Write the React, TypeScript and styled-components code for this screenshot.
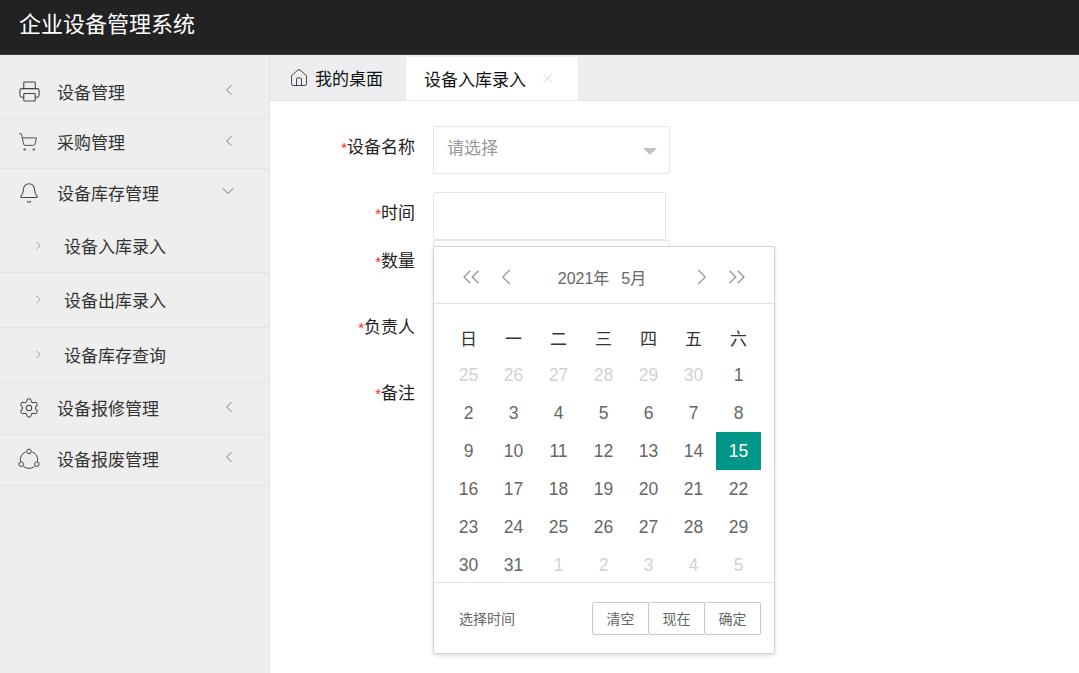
import React from 'react'
import styled, { createGlobalStyle } from 'styled-components'
import { Bell, ChevronDown, ChevronLeft, ChevronRight, ChevronsLeft, ChevronsRight, Home, Printer, Settings, ShoppingCart, X } from 'lucide-react'

const GlobalStyle = createGlobalStyle`
  html, body { margin: 0; padding: 0; height: 100%; background: #fff; }
  body { font-family: "Liberation Sans", "Noto Sans CJK SC", sans-serif; overflow: hidden; }
`

const ShareIcon = () => (
  <svg width="22" height="22" viewBox="0 0 22 22" fill="none" stroke="#444" strokeWidth="1">
    <path d="M7.6 3.9A8.2 8.2 0 0 0 2.6 13.6M5.4 18.2a8.2 8.2 0 0 0 11.2 0M19.4 13.6a8.2 8.2 0 0 0-5-9.7" />
    <circle cx="11" cy="3.4" r="2.3" />
    <circle cx="3.2" cy="16.2" r="2.3" />
    <circle cx="18.8" cy="16.2" r="2.3" />
  </svg>
)

const menuTop = [
  { text: '设备管理', icon: <Printer size={23} strokeWidth={1.1} color="#444" /> },
  { text: '采购管理', icon: <ShoppingCart size={20} strokeWidth={1.1} color="#444" /> },
]
const menuBottom = [
  { text: '设备报修管理', icon: <Settings size={22} strokeWidth={1.1} color="#444" /> },
  { text: '设备报废管理', icon: <ShareIcon /> },
]
const subMenu = ['设备入库录入', '设备出库录入', '设备库存查询']
const weekDays = ['日', '一', '二', '三', '四', '五', '六']

type Day = { n: number; muted?: boolean; active?: boolean }
const days: Day[] = [
  ...[25, 26, 27, 28, 29, 30].map(n => ({ n, muted: true })),
  ...Array.from({ length: 31 }, (_, i) => ({ n: i + 1, active: i === 14 })),
  ...[1, 2, 3, 4, 5].map(n => ({ n, muted: true })),
]

export default function App(): React.ReactElement {
  return (
    <Page>
      <GlobalStyle />
      <Header>企业设备管理系统</Header>
      <Body>
        <Sidebar>
          {menuTop.map(m => (
            <MenuRow key={m.text}>
              <MenuIcon>{m.icon}</MenuIcon>
              <MenuText>{m.text}</MenuText>
              <MenuArrow><ChevronLeft size={18} strokeWidth={1} /></MenuArrow>
            </MenuRow>
          ))}
          <MenuRow $open>
            <MenuIcon><Bell size={22} strokeWidth={1.1} color="#444" /></MenuIcon>
            <MenuText>设备库存管理</MenuText>
            <MenuArrow $down><ChevronDown size={20} strokeWidth={1} /></MenuArrow>
          </MenuRow>
          <SubMenu>
            {subMenu.map(s => (
              <SubRow key={s}>
                <ChevronRight size={13} strokeWidth={1} color="#555" />
                <SubText>{s}</SubText>
              </SubRow>
            ))}
          </SubMenu>
          {menuBottom.map(m => (
            <MenuRow key={m.text}>
              <MenuIcon>{m.icon}</MenuIcon>
              <MenuText>{m.text}</MenuText>
              <MenuArrow><ChevronLeft size={18} strokeWidth={1} /></MenuArrow>
            </MenuRow>
          ))}
        </Sidebar>
        <Main>
          <TabBar>
            <HomeTab>
              <Home size={20} strokeWidth={1} color="#223" />
              我的桌面
            </HomeTab>
            <ActiveTab>
              设备入库录入
              <X size={15} strokeWidth={1} color="#bbb" />
            </ActiveTab>
          </TabBar>
          <Form>
            <FormRow $height={48} $gap={18}>
              <Label><Star>*</Star>设备名称</Label>
              <SelectBox>
                请选择
                <Caret />
              </SelectBox>
            </FormRow>
            <FormRow $height={48} $gap={0}>
              <Label><Star>*</Star>时间</Label>
              <TextInput $width={233} />
            </FormRow>
            <FormRow $height={48} $gap={18}>
              <LabelRaised><Star>*</Star>数量</LabelRaised>
              <TextInput $width={237} />
            </FormRow>
            <FormRow $height={48} $gap={18}>
              <Label><Star>*</Star>负责人</Label>
              <TextInput $width={237} />
            </FormRow>
            <FormRow $height={48} $gap={0}>
              <Label><Star>*</Star>备注</Label>
              <TextInput $width={237} />
            </FormRow>
            <Calendar>
              <CalHead>
                <CalNav>
                  <ChevronsLeft size={28} strokeWidth={1.2} />
                  <ChevronLeft size={26} strokeWidth={1.2} />
                </CalNav>
                <CalTitle><span>2021年</span><span>5月</span></CalTitle>
                <CalNav>
                  <ChevronRight size={26} strokeWidth={1.2} />
                  <ChevronsRight size={28} strokeWidth={1.2} />
                </CalNav>
              </CalHead>
              <CalGrid>
                {weekDays.map(w => <WeekCell key={w}>{w}</WeekCell>)}
                {days.map((d, i) => (
                  <DayCell key={i} $muted={d.muted} $active={d.active}>{d.n}</DayCell>
                ))}
              </CalGrid>
              <CalFoot>
                <FootLabel>选择时间</FootLabel>
                <FootButtons>
                  <FootButton>清空</FootButton>
                  <FootButton>现在</FootButton>
                  <FootButton>确定</FootButton>
                </FootButtons>
              </CalFoot>
            </Calendar>
          </Form>
        </Main>
      </Body>
    </Page>
  )
}

const Page = styled.div`
  width: 1079px;
  height: 673px;
  display: flex;
  flex-direction: column;
  overflow: hidden;
`

const Header = styled.header`
  height: 54px;
  flex: none;
  box-sizing: content-box;
  background: #222;
  border-bottom: 1px solid #3c3c3c;
  color: #fff;
  font-size: 22px;
  line-height: 50px;
  padding-left: 19px;
`

const Body = styled.div`
  flex: 1;
  display: flex;
  min-height: 0;
`

const Sidebar = styled.aside`
  width: 269px;
  flex: none;
  background: #eee;
  border-right: 1px solid #e2e2e2;
  padding-top: 13px;
  box-sizing: content-box;
`

const MenuRow = styled.div<{ $open?: boolean }>`
  height: 49.5px;
  display: flex;
  align-items: center;
  border-bottom: ${p => (p.$open ? 'none' : '1px solid #e2e2e2')};
  color: #333;
`

const MenuIcon = styled.span`
  width: 57px;
  padding-left: 18px;
  box-sizing: border-box;
  display: flex;
  align-items: center;
  flex: none;
  margin-top: -2px;
`

const MenuText = styled.span`
  font-size: 17px;
  line-height: 24px;
  width: 163px;
  flex: none;
  margin-top: 2px;
`

const MenuArrow = styled.span<{ $down?: boolean }>`
  display: flex;
  color: #555;
  margin-top: -5px;
  margin-left: ${p => (p.$down ? '-2px' : '0')};
`

const SubMenu = styled.div`
  border-bottom: 1px solid #e2e2e2;
  margin-bottom: 2px;
  border-top: none;
`

const SubRow = styled.div`
  height: 54px;
  display: flex;
  align-items: center;
  padding-left: 32px;
  color: #333;
  border-bottom: 1px solid #e2e2e2;
  &:last-child { border-bottom: none; }
  &:first-child { height: 53px; }
`

const SubText = styled.span`
  font-size: 17px;
  margin-left: 19px;
`

const Main = styled.main`
  flex: 1;
  min-width: 0;
  display: flex;
  flex-direction: column;
`

const TabBar = styled.div`
  height: 45px;
  flex: none;
  background: #eeeef0;
  border-bottom: 1px solid #e6e6e6;
  display: flex;
  align-items: stretch;
`

const HomeTab = styled.div`
  width: 135px;
  display: flex;
  align-items: center;
  gap: 6px;
  padding-left: 19px;
  box-sizing: border-box;
  font-size: 17px;
  color: #111;
`

const ActiveTab = styled.div`
  width: 174px;
  margin-top: 2px;
  margin-bottom: -1px;
  background: #fff;
  border-right: 1px solid #e6e6e6;
  border-left: 1px solid #e6e6e6;
  border-bottom: 1px solid #eee;
  border-radius: 2px 2px 0 0;
  display: flex;
  align-items: center;
  gap: 14px;
  padding-left: 18px;
  box-sizing: border-box;
  font-size: 17px;
  color: #111;
`

const Form = styled.form`
  position: relative;
  padding-top: 25px;
  flex: 1;
`

const FormRow = styled.div<{ $height: number; $gap: number }>`
  display: flex;
  height: ${p => p.$height}px;
  margin-bottom: ${p => p.$gap}px;
`

const Label = styled.label`
  width: 145px;
  flex: none;
  text-align: right;
  font-size: 17px;
  line-height: 44px;
  color: #222;
`

const LabelRaised = styled(Label)`
  line-height: 44px;
`

const Star = styled.span`
  color: #f22;
  font-size: 15px;
`

const SelectBox = styled.div`
  position: relative;
  margin-left: 18px;
  width: 237px;
  box-sizing: border-box;
  border: 1px solid #e6e6e6;
  border-radius: 2px;
  font-size: 17px;
  line-height: 44px;
  padding-left: 13px;
  color: #999;
`

const Caret = styled.i`
  position: absolute;
  right: 12px;
  top: 21px;
  width: 0;
  height: 0;
  border-left: 7.5px solid transparent;
  border-right: 7.5px solid transparent;
  border-top: 7.5px solid #c2c2c2;
`

const TextInput = styled.div<{ $width: number }>`
  margin-left: 18px;
  width: ${p => p.$width}px;
  box-sizing: border-box;
  border: 1px solid #e6e6e6;
  border-radius: 2px;
  background: #fff;
`

const Calendar = styled.div`
  position: absolute;
  left: 163px;
  top: 145px;
  width: 342px;
  height: 408px;
  box-sizing: border-box;
  background: #fff;
  border: 1px solid #d2d2d2;
  border-radius: 2px;
  box-shadow: 0 2px 4px rgba(0, 0, 0, 0.12);
  display: flex;
  flex-direction: column;
`

const CalHead = styled.div`
  height: 56px;
  flex: none;
  border-bottom: 1px solid #e2e2e2;
  display: flex;
  align-items: center;
  justify-content: space-between;
  padding: 0 23px;
  color: #999;
`

const CalNav = styled.div`
  display: flex;
  align-items: center;
  gap: 8px;
  width: 68px;
  margin-top: 4px;
  &:last-child { justify-content: flex-end; gap: 8px; }
`

const CalTitle = styled.div`
  display: flex;
  gap: 12px;
  font-size: 16px;
  color: #666;
  margin-top: 4px;
  margin-left: -4px;
`

const CalGrid = styled.div`
  display: grid;
  grid-template-columns: repeat(7, 45px);
  grid-auto-rows: 38px;
  padding: 14px 0 0 12px;
  flex: none;
  height: 278px;
  box-sizing: border-box;
`

const WeekCell = styled.div`
  display: flex;
  align-items: center;
  justify-content: center;
  font-size: 17px;
  color: #333;
`

const DayCell = styled.div<{ $muted?: boolean; $active?: boolean }>`
  display: flex;
  align-items: center;
  justify-content: center;
  font-size: 17.5px;
  color: ${p => (p.$active ? '#fff' : p.$muted ? '#d2d2d2' : '#666')};
  background: ${p => (p.$active ? '#009688' : 'transparent')};
`

const CalFoot = styled.div`
  flex: 1;
  border-top: 1px solid #e2e2e2;
  display: flex;
  align-items: center;
  justify-content: space-between;
  padding: 0 13px 0 25px;
`

const FootLabel = styled.span`
  font-size: 14px;
  color: #666;
`

const FootButtons = styled.div`
  display: flex;
`

const FootButton = styled.button`
  width: 57px;
  height: 33px;
  margin-left: -1px;
  padding: 0;
  background: #fff;
  border: 1px solid #c9c9c9;
  border-radius: 2px;
  font: inherit;
  font-size: 14px;
  color: #666;
`
